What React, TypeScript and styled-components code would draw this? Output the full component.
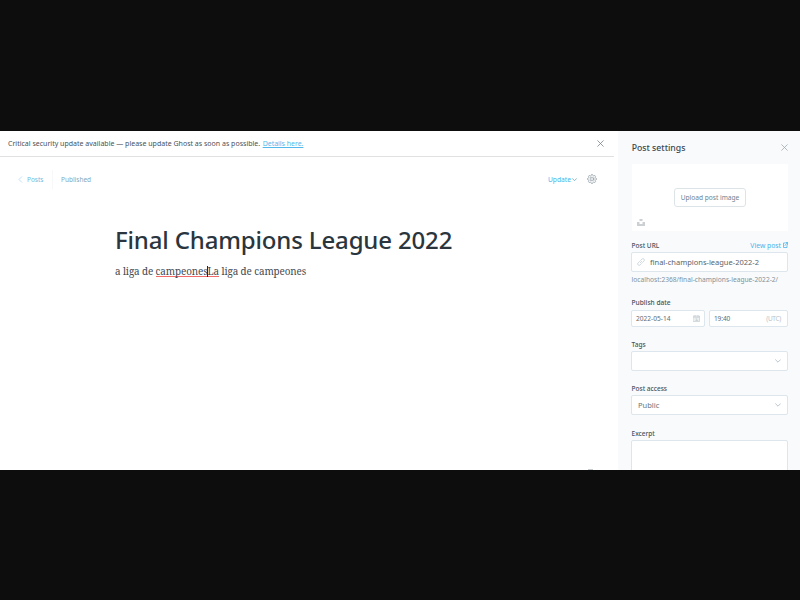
import React from "react";
import styled, { createGlobalStyle } from "styled-components";

const GlobalStyle = createGlobalStyle`
  * { box-sizing: border-box; }
  body { margin: 0; background: #0d0d0d; overflow: hidden; }
`;

const Screen = styled.div`
  width: 800px;
  height: 600px;
  padding: 131px 0 130px;
  background: #0d0d0d;
  font-family: "Noto Sans", "Open Sans", sans-serif;
  color: #394047;
`;

const Window = styled.div`
  display: flex;
  height: 339px;
  background: #fff;
  overflow: hidden;
`;

const Main = styled.main`
  display: flex;
  flex-direction: column;
  width: 618px;
  height: 339px;
`;

const Label = styled.span<{ $size: number; $color: string; $spacing?: number; $weight?: number }>`
  font-size: ${(p) => p.$size}px;
  color: ${(p) => p.$color};
  letter-spacing: ${(p) => p.$spacing ?? 0}px;
  font-weight: ${(p) => p.$weight ?? 400};
  white-space: nowrap;
`;

const AlertBar = styled.div`
  display: flex;
  align-items: center;
  width: 614px;
  height: 26px;
  padding: 0 10px 0 8px;
  border-bottom: 1px solid #dfe1e3;
`;

const AlertLink = styled.a`
  margin-left: 2.5px;
  font-size: 7px;
  letter-spacing: -0.03px;
  color: #55b8ec;
  text-decoration: underline;
  white-space: nowrap;
`;

const Spacer = styled.div`
  flex: 1;
`;

const Toolbar = styled.header`
  display: flex;
  align-items: center;
  height: 19px;
  margin: 13px 21px 0 18px;
`;

const BackLink = styled.div`
  display: flex;
  align-items: center;
  gap: 4px;
  width: 34px;
`;

const Status = styled.div`
  display: flex;
  align-items: center;
  height: 19px;
  padding-left: 8px;
  border-left: 1px solid #f6f8f9;
`;

const UpdateButton = styled.div`
  display: flex;
  align-items: center;
  gap: 1px;
  margin-right: 10px;
`;

const GearButton = styled.div`
  margin-bottom: 2px;
`;

const PostTitle = styled.h1`
  margin: 34px 0 0 115px;
  height: 34px;
  font-size: 24px;
  line-height: 34px;
  font-weight: 500;
  letter-spacing: -0.16px;
  color: #2b353d;
  white-space: nowrap;
`;

const PostBody = styled.p`
  display: flex;
  margin: 7px 0 0 115px;
  height: 14px;
  font-family: "Noto Serif", "Liberation Serif", serif;
  font-size: 9.9px;
  line-height: 14px;
  letter-spacing: -0.11px;
  color: #3f484f;
  white-space: pre;
`;

const Misspelled = styled.span`
  height: 13px;
  border-bottom: 1px solid #f06a6a;
`;

const Caret = styled.span`
  display: inline-block;
  width: 1px;
  height: 11px;
  margin: 0 -0.5px;
  vertical-align: -2px;
  background: #20272c;
`;

const WordCount = styled.div`
  width: 5px;
  height: 1px;
  margin: auto 0 0 588px;
  background: #c5ccd0;
`;

const Sidebar = styled.aside`
  width: 182px;
  height: 339px;
  padding: 0 12px 0 13px;
  background: #f8fafc;
`;

const SidebarHeader = styled.div`
  display: flex;
  align-items: center;
  justify-content: space-between;
  height: 33px;
  padding-left: 0.7px;
`;

const ImageUploader = styled.div`
  display: grid;
  grid-template-rows: 24px 19px 1fr;
  height: 67px;
  margin-left: 1px;
  border-radius: 1px;
  background: #fff;
`;

const UploadButton = styled.div`
  grid-row: 2;
  justify-self: center;
  display: flex;
  align-items: center;
  justify-content: center;
  width: 72px;
  height: 19px;
  border: 1px solid #dde4e8;
  border-radius: 3px;
`;

const UnsplashSlot = styled.div`
  grid-row: 3;
  display: flex;
  padding: 12px 0 0 5px;
`;

const FieldLabel = styled.div<{ $top: number }>`
  display: flex;
  align-items: center;
  justify-content: space-between;
  height: 10px;
  margin-top: ${(p) => p.$top}px;
  padding-left: 0.6px;
`;

const ViewLink = styled.div`
  display: flex;
  align-items: center;
  gap: 2px;
`;

const Field = styled.div<{ $height: number; $pad?: number; $top?: number }>`
  display: flex;
  align-items: center;
  height: ${(p) => p.$height}px;
  margin-top: ${(p) => p.$top ?? 2}px;
  padding: 0 6px 0 ${(p) => p.$pad ?? 6}px;
  gap: 5px;
  border: 1px solid #dce6ec;
  border-radius: 2px;
  background: #fff;
`;

const TimeField = styled(Field)`
  padding-right: 6px;
`;

const DateField = styled(Field)`
  padding-right: 4px;
`;

const DateRow = styled.div`
  display: grid;
  grid-template-columns: 74px 79px;
  gap: 4px;
  margin-top: 3px;
`;

const Hint = styled.div`
  display: flex;
  align-items: center;
  height: 12px;
  margin-top: 1px;
  padding-left: 0.6px;
`;

const Icon = styled.svg`
  display: block;
  flex: none;
  fill: none;
  stroke-linecap: round;
  stroke-linejoin: round;
`;

const Close = ({ size, color }: { size: number; color: string }) => (
  <Icon width={size} height={size} viewBox="0 0 8 8" stroke={color} strokeWidth=".9">
    <path d="M.8.8l6.4 6.4M7.2.8L.8 7.2" />
  </Icon>
);

const Chevron = ({ width, color }: { width: number; color: string }) => (
  <Icon width={width} height={(width * 2) / 3} viewBox="0 0 6 4" stroke={color} strokeWidth=".9">
    <path d="M.6.8L3 3.2 5.4.8" />
  </Icon>
);

const Gear = () => (
  <Icon width="10" height="10" viewBox="0 0 20 20" stroke="#82919b" strokeWidth="1.3">
    <path d="M8.2 3.2L9 1h2l.8 2.2 1.8.7 2.1-1 1.4 1.4-1 2.1.7 1.8L19 9v2l-2.2.8-.7 1.8 1 2.1-1.4 1.4-2.1-1-1.8.7L11 19H9l-.8-2.2-1.8-.7-2.1 1-1.4-1.4 1-2.1-.7-1.8L1 11V9l2.2-.8.7-1.8-1-2.1 1.4-1.4 2.1 1z" />
    <circle cx="10" cy="10" r="3.8" />
    <path d="M10 10L8 7M10 10h3.6M10 10l-2 3" strokeWidth=".5" />
  </Icon>
);

const LinkIcon = () => (
  <Icon width="8" height="8" viewBox="0 0 16 16" stroke="#bdcbd3" strokeWidth="1.4">
    <path d="M6.5 9.5l3-3M7 5l2.9-2.9a2.8 2.8 0 014 4L11 9M9 11l-2.9 2.9a2.8 2.8 0 01-4-4L5 7" />
  </Icon>
);

const CalendarIcon = () => (
  <Icon width="7" height="7" viewBox="0 0 14 14" stroke="#c6cdd1" strokeWidth="1.4">
    <path d="M1 2h12v11H1zM1 4.5h12M4 .8V3M10 .8V3M6 7.5h1.5V11M5.5 11h4" fill="#edf0f1" />
  </Icon>
);

const ExternalIcon = () => (
  <Icon width="5" height="6" viewBox="0 0 10 12" stroke="#55b8ec" strokeWidth="1.7">
    <path d="M4 2H1v9h7V7M6 1h3v4M9 1L4 7" />
  </Icon>
);

export default function App() {
  return (
    <Screen>
      <GlobalStyle />
      <Window>
        <Main>
          <AlertBar>
            <Label $size={7} $spacing={0.008} $color="#495158">
              Critical security update available — please update Ghost as soon as possible.
            </Label>
            <AlertLink>Details here.</AlertLink>
            <Spacer />
            <Close size={7} color="#79838a" />
          </AlertBar>
          <Toolbar>
            <BackLink>
              <Icon width="5" height="7" viewBox="0 0 5 7" stroke="#a3d6f0" strokeWidth=".7">
                <path d="M3.7.8L1 3.5l2.7 2.7" />
              </Icon>
              <Label $size={6.5} $color="#6cbce2">Posts</Label>
            </BackLink>
            <Status>
              <Label $size={6.5} $color="#7fa9bd">Published</Label>
            </Status>
            <Spacer />
            <UpdateButton>
              <Label $size={6.7} $color="#45b4ec">Update</Label>
              <Chevron width={5} color="#5a9fc2" />
            </UpdateButton>
            <GearButton>
              <Gear />
            </GearButton>
          </Toolbar>
          <PostTitle>Final Champions League 2022</PostTitle>
          <PostBody>
            a liga de <Misspelled>campeones<Caret />La</Misspelled> liga de campeones
          </PostBody>
          <WordCount />
        </Main>
        <Sidebar>
          <SidebarHeader>
            <Label $size={8.7} $color="#3b4850" $weight={500}>Post settings</Label>
            <Close size={7} color="#a0aab0" />
          </SidebarHeader>
          <ImageUploader>
            <UploadButton>
              <Label $size={6.6} $color="#6e838f">Upload post image</Label>
            </UploadButton>
            <UnsplashSlot>
              <svg width="8" height="7" viewBox="0 0 8 7" fill="#ccd0d3">
                <path d="M2.5 0h3v2h-3zM0 3h2.5v2h3V3H8v4H0z" />
              </svg>
            </UnsplashSlot>
          </ImageUploader>
          <FieldLabel $top={9}>
            <Label $size={6.5} $color="#46535b" $weight={500}>Post URL</Label>
            <ViewLink>
              <Label $size={6.8} $color="#45b4ec">View post</Label>
              <ExternalIcon />
            </ViewLink>
          </FieldLabel>
          <Field $height={20} $pad={5}>
            <LinkIcon />
            <Label $size={7.5} $color="#59656d">final-champions-league-2022-2</Label>
          </Field>
          <Hint>
            <Label $size={6.65} $color="#80929d">localhost:2368/final-champions-league-2022-2/</Label>
          </Hint>
          <FieldLabel $top={12}>
            <Label $size={6.6} $color="#46535b" $weight={500}>Publish date</Label>
          </FieldLabel>
          <DateRow>
            <DateField $height={17} $pad={4} $top={0}>
              <Label $size={6.6} $color="#606d75">2022-05-14</Label>
              <Spacer />
              <CalendarIcon />
            </DateField>
            <TimeField $height={17} $pad={4} $top={0}>
              <Label $size={6.5} $spacing={-0.1} $color="#606d75">19:40</Label>
              <Spacer />
              <Label $size={6.5} $spacing={-0.3} $color="#b8c3ca">(UTC)</Label>
            </TimeField>
          </DateRow>
          <FieldLabel $top={12}>
            <Label $size={6.5} $color="#46535b" $weight={500}>Tags</Label>
          </FieldLabel>
          <Field $height={20}>
            <Spacer />
            <Chevron width={6} color="#b3c0c8" />
          </Field>
          <FieldLabel $top={12}>
            <Label $size={6.5} $color="#46535b" $weight={500}>Post access</Label>
          </FieldLabel>
          <Field $height={20}>
            <Label $size={7.5} $color="#68757e">Public</Label>
            <Spacer />
            <Chevron width={6} color="#b3c0c8" />
          </Field>
          <FieldLabel $top={13}>
            <Label $size={6.5} $color="#46535b" $weight={500}>Excerpt</Label>
          </FieldLabel>
          <Field $height={50} />
        </Sidebar>
      </Window>
    </Screen>
  );
}
